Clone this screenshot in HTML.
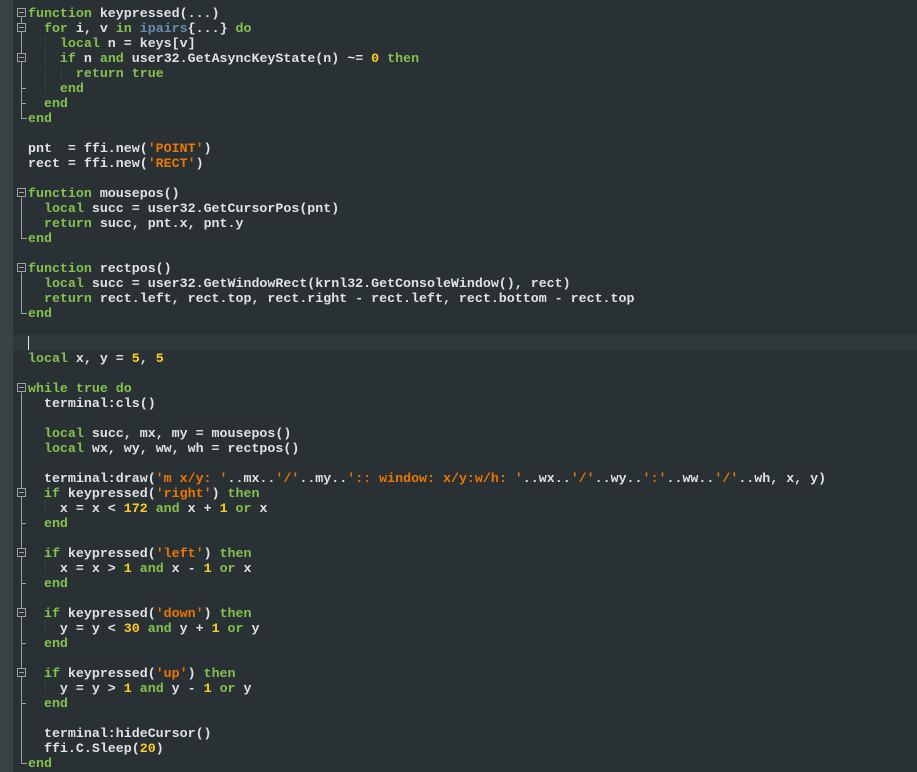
<!DOCTYPE html>
<html><head><meta charset="utf-8"><style>
html,body{margin:0;padding:0;background:#293134;width:917px;height:772px;overflow:hidden}
.g{position:absolute;left:0;top:0;width:13px;height:772px;background:#3a4246}
.cl{position:absolute;left:13px;top:335px;width:904px;height:16px;background:#2f393c}
.cur{position:absolute;left:28px;top:336px;width:1px;height:14px;background:#e0e2e4}
pre{position:absolute;left:28px;top:6px;margin:0;font-family:"Liberation Mono",monospace;font-weight:bold;font-size:13.3px;line-height:15px;color:#e0e2e4}
.k{color:#85c14e}.n{color:#ffcd22}.s{color:#ec7600}.b{color:#678cb1}
svg{position:absolute;left:0;top:0}
</style></head><body>
<div class="g"></div><div class="cl"></div><div class="cur"></div>
<svg width="917" height="772" fill="none" stroke="#9aa0a4" stroke-width="1">
<path d="M21.5 17.5V118.5H27"/><path d="M21.5 103.5H26M21.5 88.5H26"/>
<rect x="17.5" y="8.5" width="8" height="8" fill="#293134"/><path d="M19 12.5h5"/>
<rect x="17.5" y="23.5" width="8" height="8" fill="#293134"/><path d="M19 27.5h5"/>
<rect x="17.5" y="53.5" width="8" height="8" fill="#293134"/><path d="M19 57.5h5"/>
<path d="M21.5 197.5V238.5H27"/>
<rect x="17.5" y="188.5" width="8" height="8" fill="#293134"/><path d="M19 192.5h5"/>
<path d="M21.5 272.5V313.5H27"/>
<rect x="17.5" y="263.5" width="8" height="8" fill="#293134"/><path d="M19 267.5h5"/>
<path d="M21.5 392.5V763.5H27"/>
<path d="M21.5 523.5H26M21.5 583.5H26M21.5 643.5H26M21.5 703.5H26"/>
<rect x="17.5" y="383.5" width="8" height="8" fill="#293134"/><path d="M19 387.5h5"/>
<rect x="17.5" y="488.5" width="8" height="8" fill="#293134"/><path d="M19 492.5h5"/>
<rect x="17.5" y="548.5" width="8" height="8" fill="#293134"/><path d="M19 552.5h5"/>
<rect x="17.5" y="608.5" width="8" height="8" fill="#293134"/><path d="M19 612.5h5"/>
<rect x="17.5" y="668.5" width="8" height="8" fill="#293134"/><path d="M19 672.5h5"/>
<g stroke="#4e575b" stroke-dasharray="1 2">
<path d="M45.5 36V96M61.5 66V81M45.5 501V516M45.5 561V576M45.5 621V636M45.5 681V696"/>
</g>
</svg>
<pre><span class="k">function</span> keypressed(...)
  <span class="k">for</span> i, v <span class="k">in</span> <span class="b">ipairs</span>{...} <span class="k">do</span>
    <span class="k">local</span> n = keys[v]
    <span class="k">if</span> n <span class="k">and</span> user32.GetAsyncKeyState(n) ~= <span class="n">0</span> <span class="k">then</span>
      <span class="k">return</span> <span class="k">true</span>
    <span class="k">end</span>
  <span class="k">end</span>
<span class="k">end</span>

pnt  = ffi.new(<span class="s">'POINT'</span>)
rect = ffi.new(<span class="s">'RECT'</span>)

<span class="k">function</span> mousepos()
  <span class="k">local</span> succ = user32.GetCursorPos(pnt)
  <span class="k">return</span> succ, pnt.x, pnt.y
<span class="k">end</span>

<span class="k">function</span> rectpos()
  <span class="k">local</span> succ = user32.GetWindowRect(krnl32.GetConsoleWindow(), rect)
  <span class="k">return</span> rect.left, rect.top, rect.right - rect.left, rect.bottom - rect.top
<span class="k">end</span>


<span class="k">local</span> x, y = <span class="n">5</span>, <span class="n">5</span>

<span class="k">while</span> <span class="k">true</span> <span class="k">do</span>
  terminal:cls()

  <span class="k">local</span> succ, mx, my = mousepos()
  <span class="k">local</span> wx, wy, ww, wh = rectpos()

  terminal:draw(<span class="s">'m x/y: '</span>..mx..<span class="s">'/'</span>..my..<span class="s">':: window: x/y:w/h: '</span>..wx..<span class="s">'/'</span>..wy..<span class="s">':'</span>..ww..<span class="s">'/'</span>..wh, x, y)
  <span class="k">if</span> keypressed(<span class="s">'right'</span>) <span class="k">then</span>
    x = x &lt; <span class="n">172</span> <span class="k">and</span> x + <span class="n">1</span> <span class="k">or</span> x
  <span class="k">end</span>

  <span class="k">if</span> keypressed(<span class="s">'left'</span>) <span class="k">then</span>
    x = x &gt; <span class="n">1</span> <span class="k">and</span> x - <span class="n">1</span> <span class="k">or</span> x
  <span class="k">end</span>

  <span class="k">if</span> keypressed(<span class="s">'down'</span>) <span class="k">then</span>
    y = y &lt; <span class="n">30</span> <span class="k">and</span> y + <span class="n">1</span> <span class="k">or</span> y
  <span class="k">end</span>

  <span class="k">if</span> keypressed(<span class="s">'up'</span>) <span class="k">then</span>
    y = y &gt; <span class="n">1</span> <span class="k">and</span> y - <span class="n">1</span> <span class="k">or</span> y
  <span class="k">end</span>

  terminal:hideCursor()
  ffi.C.Sleep(<span class="n">20</span>)
<span class="k">end</span></pre>
</body></html>
